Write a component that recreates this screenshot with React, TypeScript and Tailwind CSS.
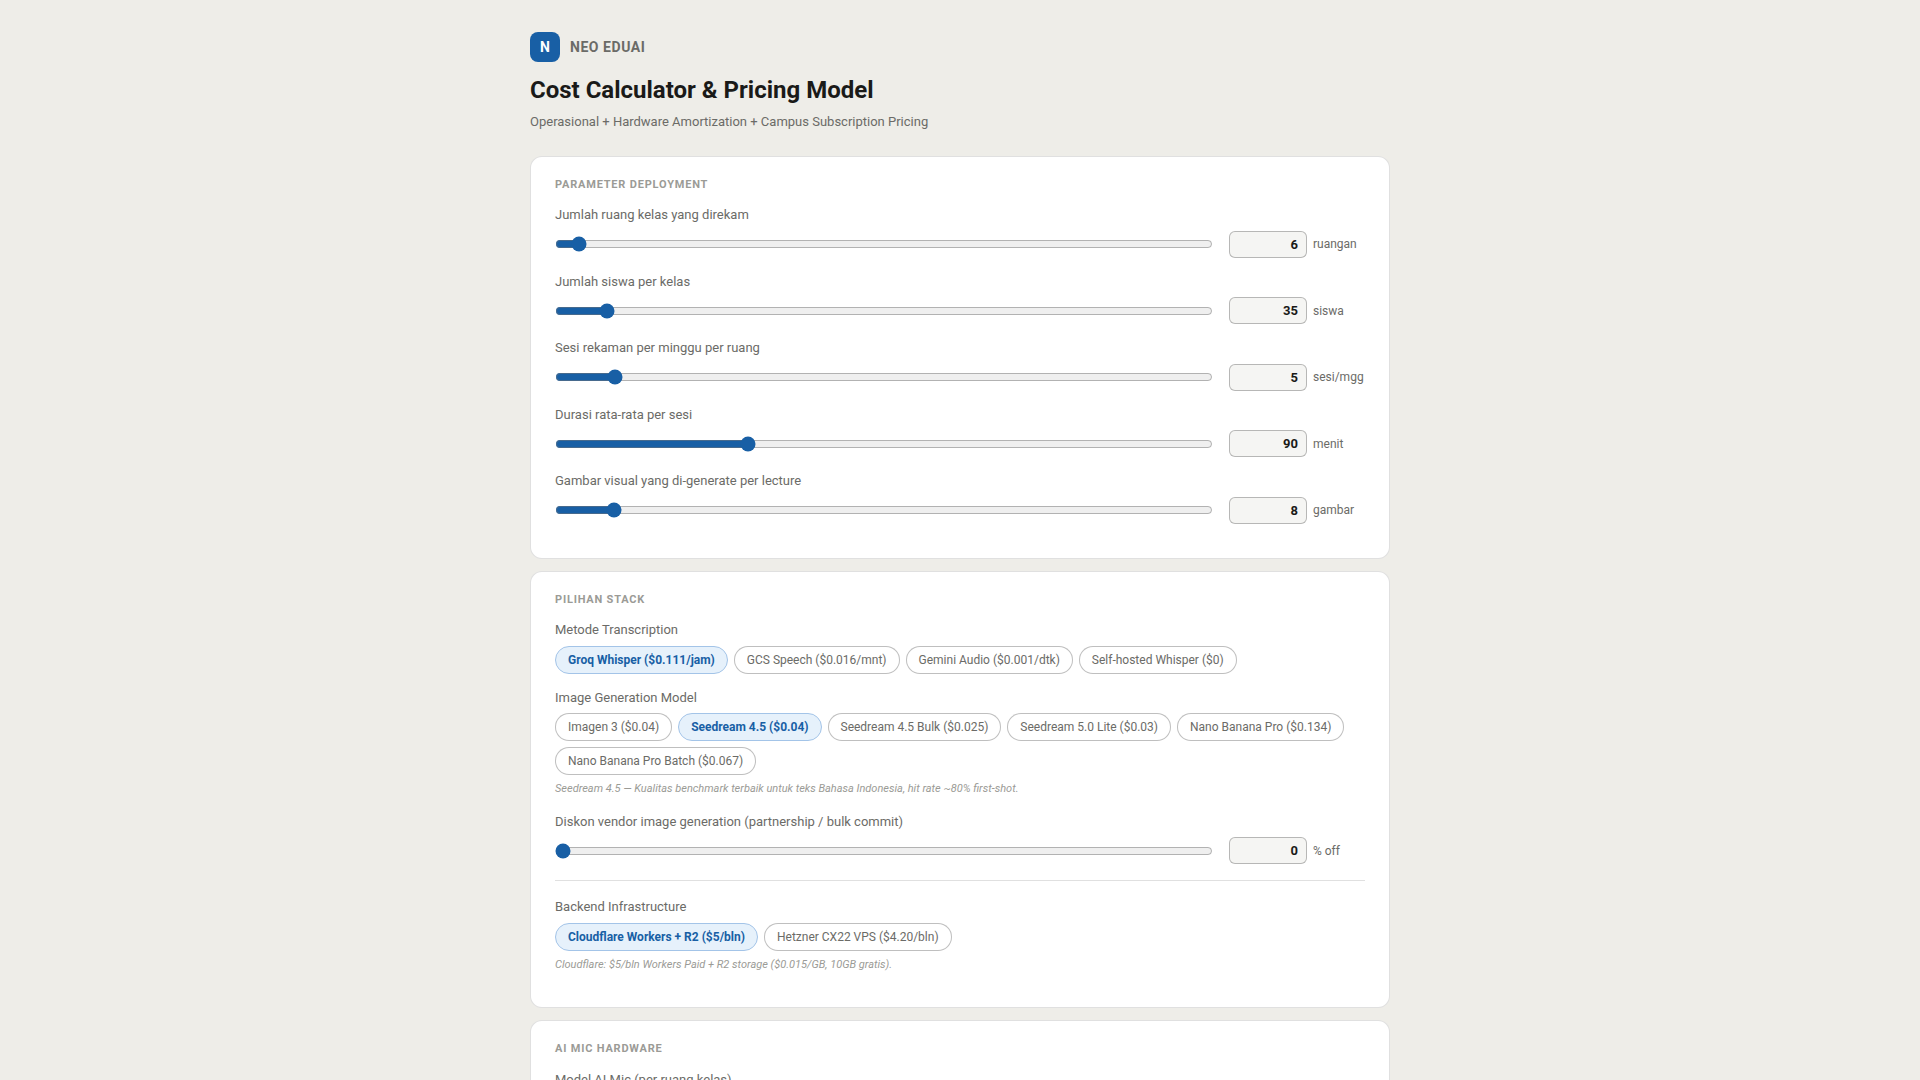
import { useState } from "react";
import type { ReactNode } from "react";

const deployment = [
  { label: "Jumlah ruang kelas yang direkam", min: 1, max: 200, value: 6, unit: "ruangan" },
  { label: "Jumlah siswa per kelas", min: 1, max: 500, value: 35, unit: "siswa" },
  { label: "Sesi rekaman per minggu per ruang", min: 1, max: 50, value: 5, unit: "sesi/mgg" },
  { label: "Durasi rata-rata per sesi", min: 15, max: 275, value: 90, unit: "menit" },
  { label: "Gambar visual yang di-generate per lecture", min: 0, max: 100, value: 8, unit: "gambar" },
];

const transcription = [
  "Groq Whisper ($0.111/jam)",
  "GCS Speech ($0.016/mnt)",
  "Gemini Audio ($0.001/dtk)",
  "Self-hosted Whisper ($0)",
];

const imageModels = [
  "Imagen 3 ($0.04)",
  "Seedream 4.5 ($0.04)",
  "Seedream 4.5 Bulk ($0.025)",
  "Seedream 5.0 Lite ($0.03)",
  "Nano Banana Pro ($0.134)",
  "Nano Banana Pro Batch ($0.067)",
];

const backends = ["Cloudflare Workers + R2 ($5/bln)", "Hetzner CX22 VPS ($4.20/bln)"];

const Card = ({ title, children }: { title: string; children?: ReactNode }) => (
  <section className="mb-3 rounded-xl border border-black/12 bg-white px-6 py-5">
    <h2 className="mb-3 text-[11px] leading-[16.5px] font-bold tracking-[0.8px] text-[#9b9b96] uppercase">
      {title}
    </h2>
    {children}
  </section>
);

const Label = ({ children }: { children: ReactNode }) => (
  <div className="mb-1.5 text-[13px] leading-[19.5px] text-[#6b6b67]">{children}</div>
);

type SliderProps = { label: string; min: number; max: number; value: number; unit: string };

const SliderField = ({ label, min, max, value, unit }: SliderProps) => {
  const [current, setCurrent] = useState(value);

  return (
    <div className="mb-3.5">
      <Label>{label}</Label>
      <div className="flex items-center gap-4">
        <input
          type="range"
          min={min}
          max={max}
          value={current}
          onChange={(e) => setCurrent(Number(e.target.value))}
          className="h-4 min-w-0 flex-1 accent-[#185fa5]"
        />
        <div className="flex w-[136px] items-center gap-1.5">
          {/* Native spin buttons are hidden so the value sits at the right edge */}
          <input
            type="number"
            value={current}
            onChange={(e) => setCurrent(Number(e.target.value))}
            className="h-[27px] w-[78px] rounded-md border border-black/25 bg-[#f5f5f3] px-2 text-right text-[13px] font-bold text-[#1a1a18] [&::-webkit-inner-spin-button]:m-0 [&::-webkit-inner-spin-button]:appearance-none"
          />
          <span className="text-xs leading-[18px] whitespace-nowrap text-[#6b6b67]">{unit}</span>
        </div>
      </div>
    </div>
  );
};

type ChipGroupProps = { label: string; options: string[]; initial: string; hint?: string };

const ChipGroup = ({ label, options, initial, hint }: ChipGroupProps) => {
  const [selected, setSelected] = useState(initial);

  return (
    <div className="mb-3.5">
      <Label>{label}</Label>
      <div className="flex flex-wrap gap-1.5">
        {options.map((option) => (
          <button
            key={option}
            onClick={() => setSelected(option)}
            className={
              option === selected
                ? "h-7 rounded-full border border-[#a3c4e8] bg-[#e6f1fb] px-3 text-xs font-bold text-[#185fa5]"
                : "h-7 rounded-full border border-black/25 bg-white px-3 text-xs text-[#6b6b67]"
            }
          >
            {option}
          </button>
        ))}
      </div>
      {hint && <p className="mt-1.5 text-[11px] leading-[16.5px] text-[#9b9b96] italic">{hint}</p>}
    </div>
  );
};

const App = () => {
  return (
    <div className="h-screen overflow-hidden bg-[#eeede8] font-[Roboto,sans-serif]">
      <main className="mx-auto w-[860px] pt-8">
        <header className="mb-6">
          <div className="mb-2.5 flex items-center gap-2.5">
            <div className="flex size-[30px] items-center justify-center rounded-lg bg-[#185fa5] text-sm font-bold text-white">
              N
            </div>
            <span className="text-sm font-bold tracking-[0.04em] text-[#6b6b67]">NEO EDUAI</span>
          </div>
          <h1 className="mb-1 text-2xl leading-9 font-bold text-[#1a1a18]">
            Cost Calculator &amp; Pricing Model
          </h1>
          <p className="text-[13px] leading-[19.5px] text-[#6b6b67]">
            Operasional + Hardware Amortization + Campus Subscription Pricing
          </p>
        </header>

        <Card title="Parameter Deployment">
          {deployment.map((field) => (
            <SliderField key={field.label} {...field} />
          ))}
        </Card>

        <Card title="Pilihan Stack">
          <ChipGroup
            label="Metode Transcription"
            options={transcription}
            initial="Groq Whisper ($0.111/jam)"
          />
          <ChipGroup
            label="Image Generation Model"
            options={imageModels}
            initial="Seedream 4.5 ($0.04)"
            hint="Seedream 4.5 — Kualitas benchmark terbaik untuk teks Bahasa Indonesia, hit rate ~80% first-shot."
          />
          <SliderField
            label="Diskon vendor image generation (partnership / bulk commit)"
            min={0}
            max={100}
            value={0}
            unit="% off"
          />
          <hr className="my-4 border-black/12" />
          <ChipGroup
            label="Backend Infrastructure"
            options={backends}
            initial="Cloudflare Workers + R2 ($5/bln)"
            hint="Cloudflare: $5/bln Workers Paid + R2 storage ($0.015/GB, 10GB gratis)."
          />
        </Card>

        <Card title="AI Mic Hardware">
          <Label>Model AI Mic (per ruang kelas)</Label>
        </Card>
      </main>
    </div>
  );
};

export default App;
